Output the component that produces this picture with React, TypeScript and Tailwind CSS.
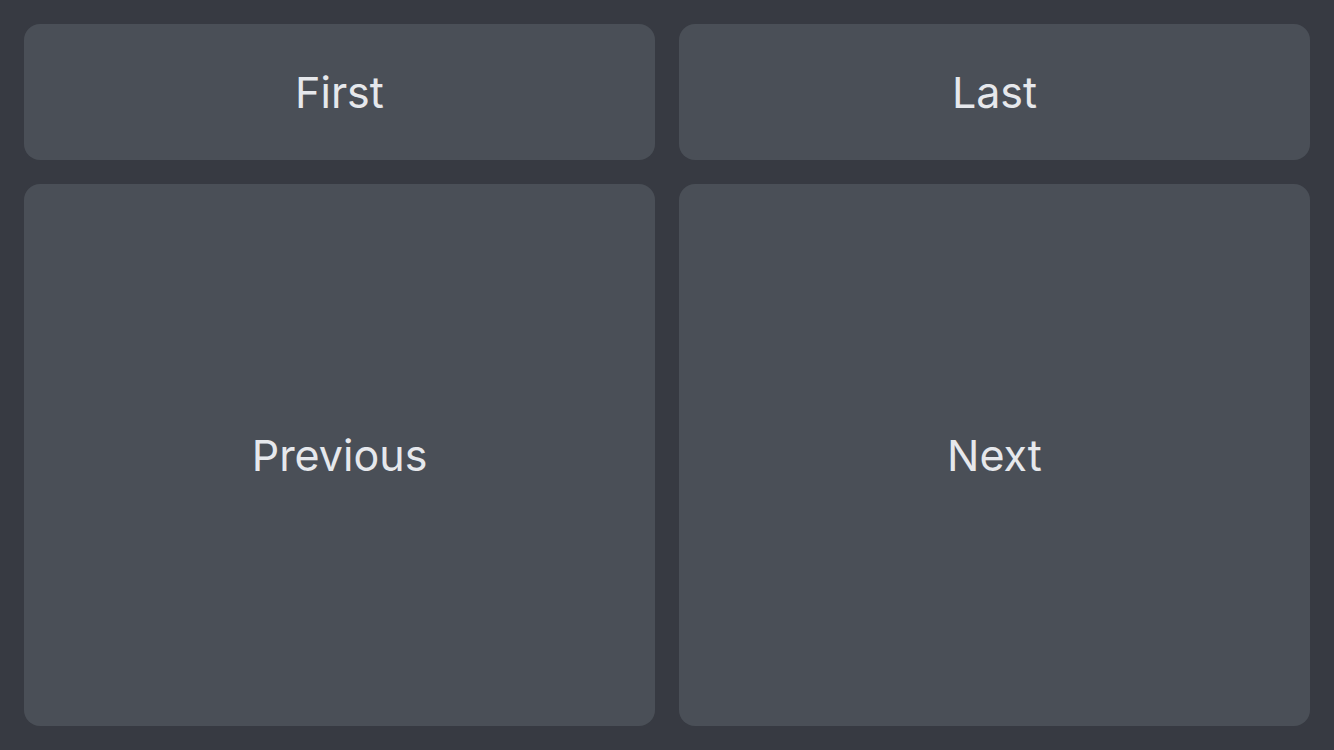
export default function App() {
  const btn =
    'flex items-center justify-center rounded-2xl bg-[#4a4f57] text-[#e6e8ec] text-[43px] leading-none';

  return (
    <div className="h-[750px] w-full bg-[#373a42] p-6 font-['Inter',sans-serif]">
      <div className="grid h-full grid-cols-2 grid-rows-[136px_1fr] gap-6">
        <button className={btn}>First</button>
        <button className={btn}>Last</button>
        <button className={btn}>Previous</button>
        <button className={btn}>Next</button>
      </div>
    </div>
  );
}
